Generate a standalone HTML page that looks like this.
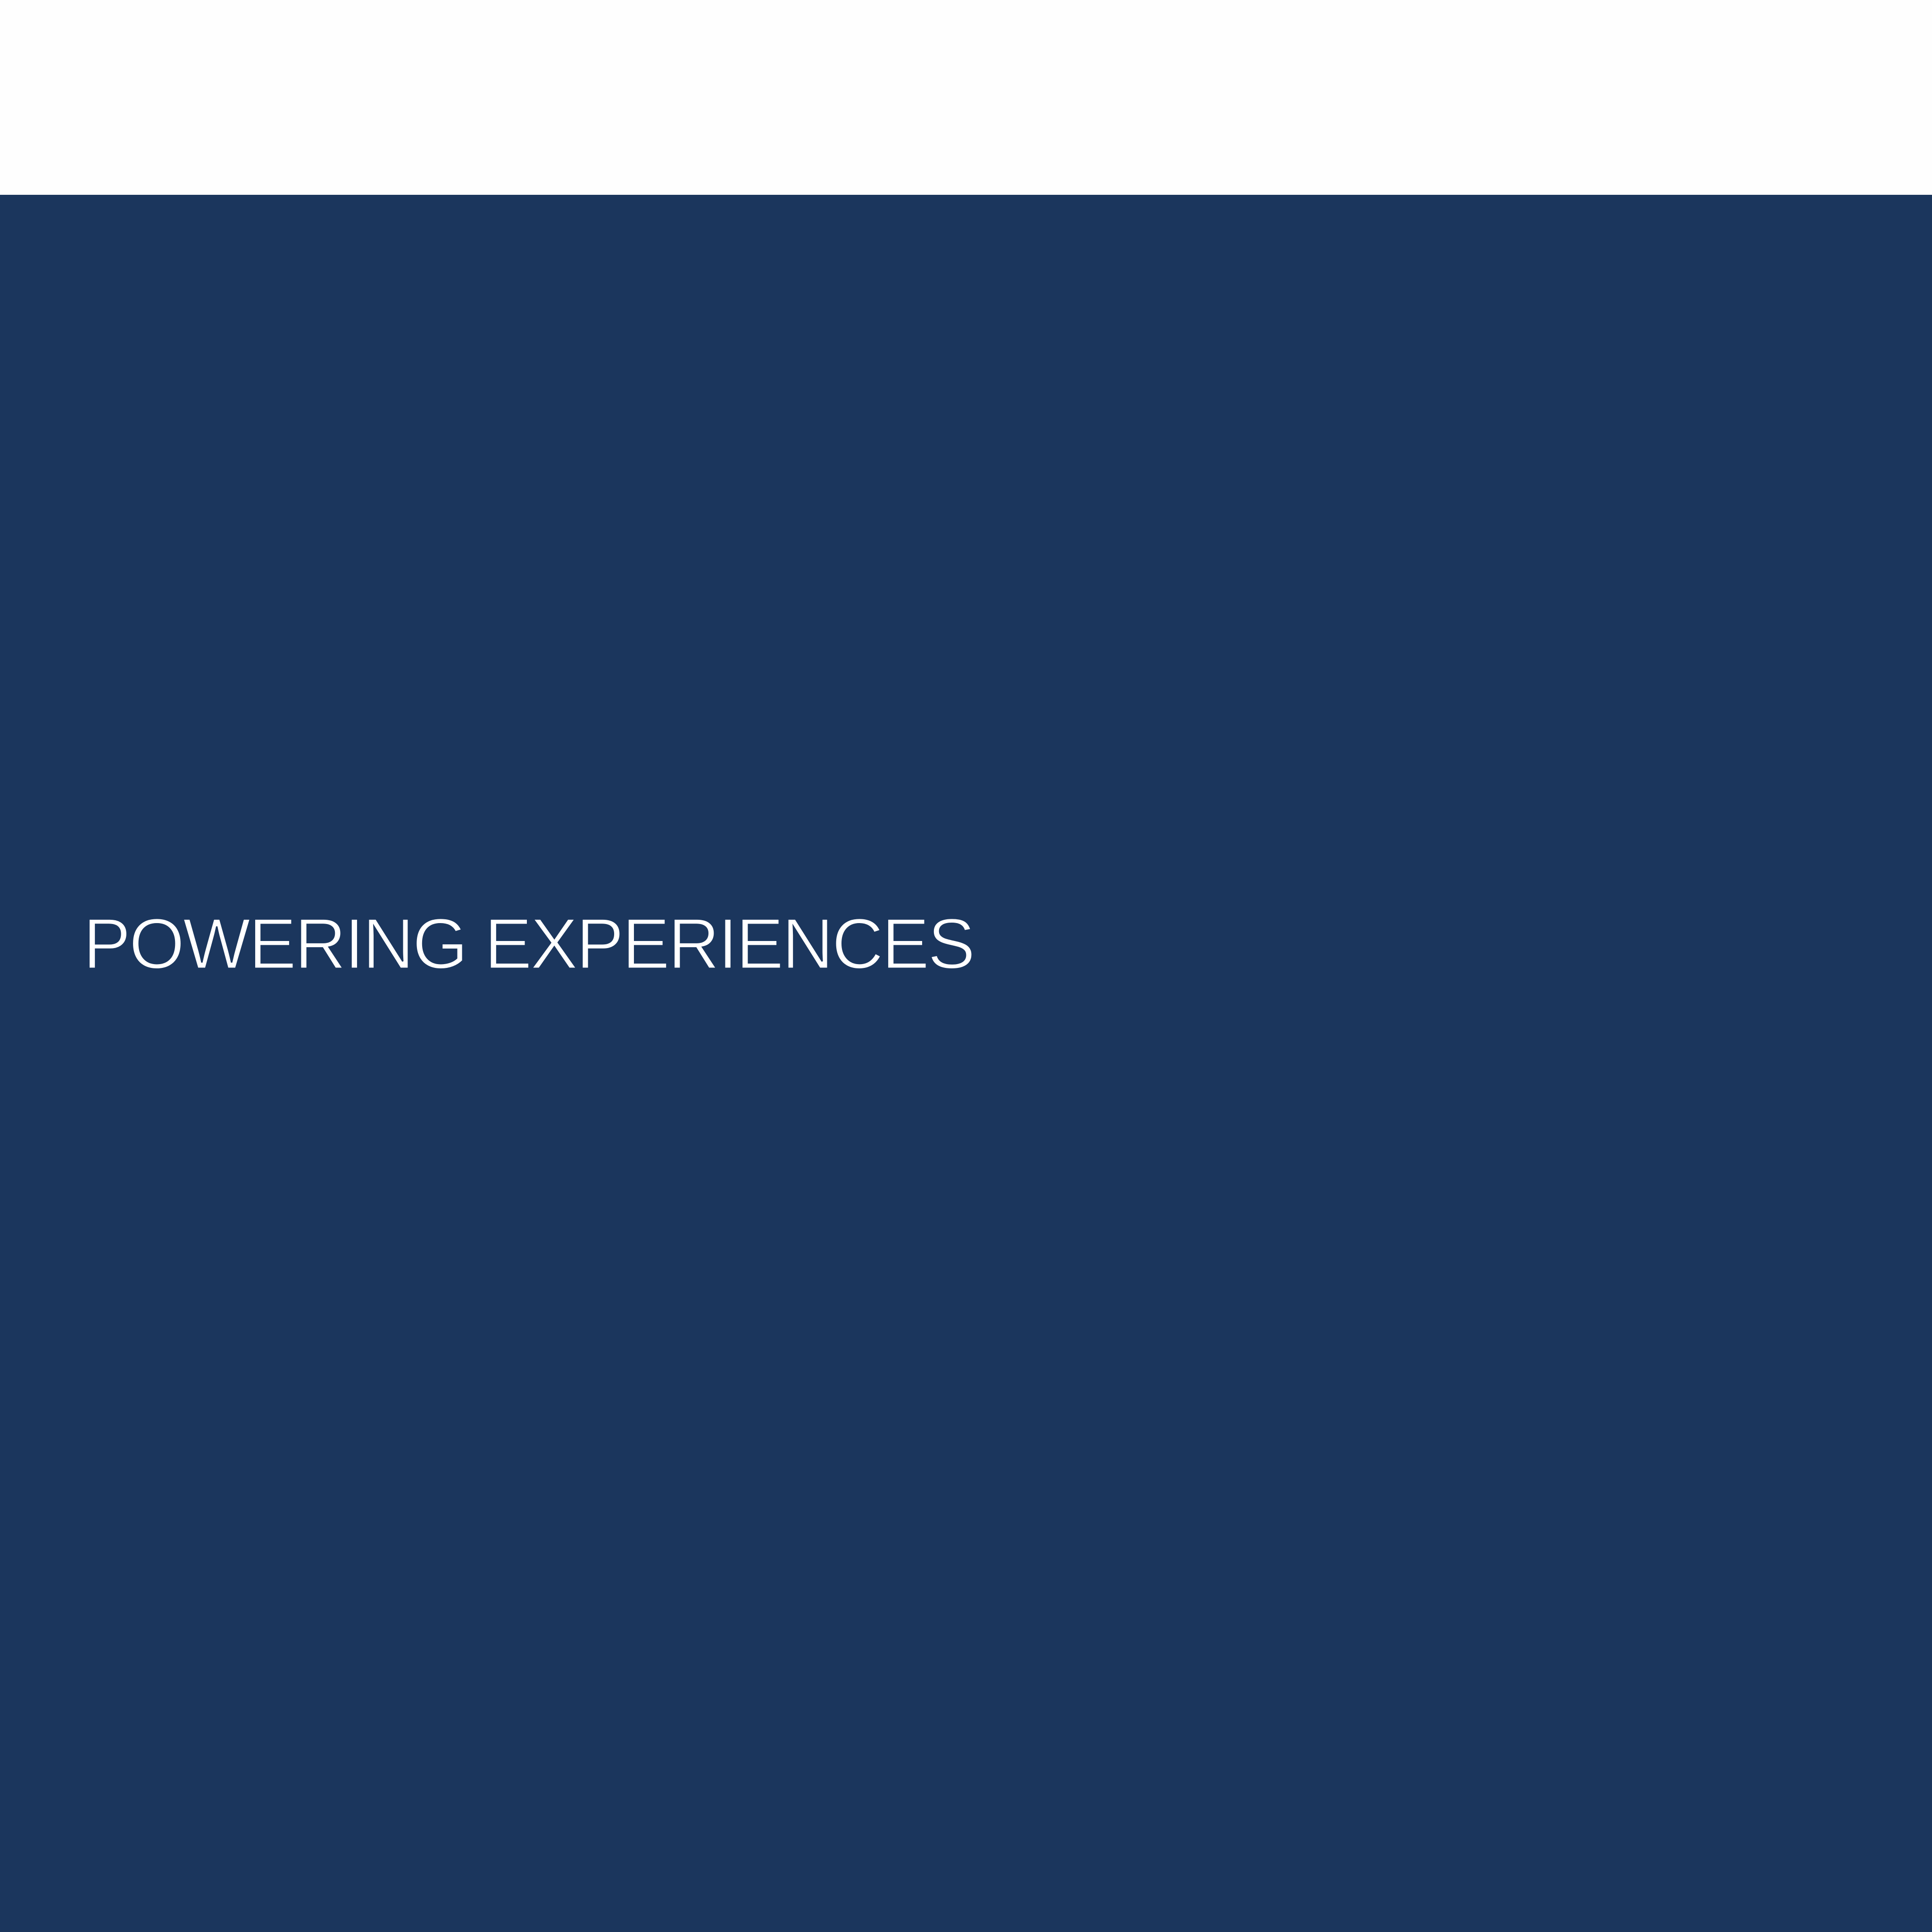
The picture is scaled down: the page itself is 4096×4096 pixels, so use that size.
<!DOCTYPE html>
<html><head><meta charset="utf-8"><style>
html,body{margin:0;padding:0;width:4096px;height:4096px;overflow:hidden;background:#1b365d}
.top{position:absolute;left:0;top:0;width:4096px;height:413px;background:#fefefe}
.t{position:absolute;left:176px;top:1925px;font-family:"Liberation Sans",sans-serif;font-size:152px;line-height:1;color:#fff;letter-spacing:-4px;white-space:nowrap;font-weight:normal;-webkit-text-stroke:3px #1b365d}
</style></head><body>
<div class="top"></div>
<div class="t">POWERING EXPERIENCES</div>
</body></html>
